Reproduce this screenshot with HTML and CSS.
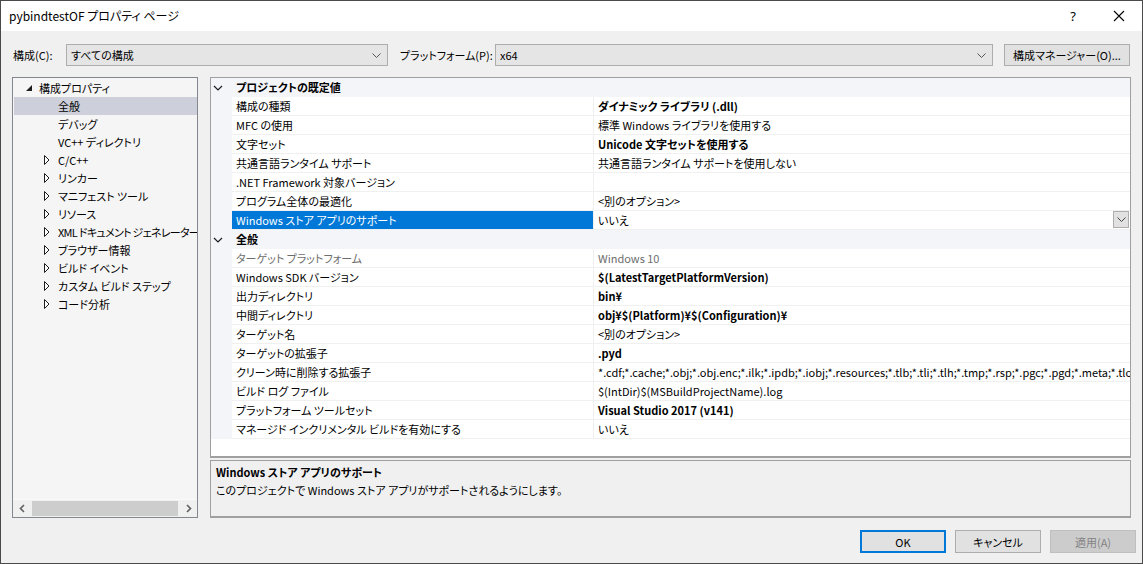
FILE: index.html
```html
<!DOCTYPE html>
<html lang="ja">
<head>
<meta charset="utf-8">
<title>pybindtestOF プロパティ ページ</title>
<link rel="stylesheet" href="styles.css">
</head>
<body>
<div class="window">
  <div class="titlebar">
    <span class="title">pybindtestOF プロパティ ページ</span>
    <span class="tb-btn help">?</span>
    <span class="tb-btn close"><svg width="12" height="12" viewBox="0 0 12 12"><path d="M1 1 L11 11 M11 1 L1 11" stroke="#000" stroke-width="1.1" fill="none"/></svg></span>
  </div>
  <div class="content">
    <div class="toprow">
      <span class="lbl lbl-conf">構成(C):</span>
      <div class="combo combo-conf"><span>すべての構成</span><svg class="chev" width="9" height="5" viewBox="0 0 9 5"><polyline points="0.5,0.5 4.5,4.5 8.5,0.5" fill="none" stroke="#555" stroke-width="1"/></svg></div>
      <span class="lbl lbl-plat">プラットフォーム(P):</span>
      <div class="combo combo-plat"><span>x64</span><svg class="chev" width="9" height="5" viewBox="0 0 9 5"><polyline points="0.5,0.5 4.5,4.5 8.5,0.5" fill="none" stroke="#555" stroke-width="1"/></svg></div>
      <div class="btn btn-mgr">構成マネージャー(O)...</div>
    </div>
    <div class="main">
      <div class="tree">
        <div class="tree-items">
          <div class="ti l0"><span class="tg"><svg width="6" height="6" viewBox="0 0 6 6"><polygon points="6,0 6,6 0,6" fill="#1e1e1e"/></svg></span><span>構成プロパティ</span></div>
          <div class="ti l1 sel"><span class="tg"></span><span>全般</span></div>
          <div class="ti l1"><span class="tg"></span><span>デバッグ</span></div>
          <div class="ti l1"><span class="tg"></span><span>VC++ ディレクトリ</span></div>
          <div class="ti l1"><span class="tg"><svg width="6" height="10" viewBox="0 0 6 10"><polygon points="0.5,0.5 5,5 0.5,9.5" fill="#fff" stroke="#1e1e1e" stroke-width="1"/></svg></span><span>C/C++</span></div>
          <div class="ti l1"><span class="tg"><svg width="6" height="10" viewBox="0 0 6 10"><polygon points="0.5,0.5 5,5 0.5,9.5" fill="#fff" stroke="#1e1e1e" stroke-width="1"/></svg></span><span>リンカー</span></div>
          <div class="ti l1"><span class="tg"><svg width="6" height="10" viewBox="0 0 6 10"><polygon points="0.5,0.5 5,5 0.5,9.5" fill="#fff" stroke="#1e1e1e" stroke-width="1"/></svg></span><span>マニフェスト ツール</span></div>
          <div class="ti l1"><span class="tg"><svg width="6" height="10" viewBox="0 0 6 10"><polygon points="0.5,0.5 5,5 0.5,9.5" fill="#fff" stroke="#1e1e1e" stroke-width="1"/></svg></span><span>リソース</span></div>
          <div class="ti l1"><span class="tg"><svg width="6" height="10" viewBox="0 0 6 10"><polygon points="0.5,0.5 5,5 0.5,9.5" fill="#fff" stroke="#1e1e1e" stroke-width="1"/></svg></span><span class="xml">XML ドキュメント ジェネレーター</span></div>
          <div class="ti l1"><span class="tg"><svg width="6" height="10" viewBox="0 0 6 10"><polygon points="0.5,0.5 5,5 0.5,9.5" fill="#fff" stroke="#1e1e1e" stroke-width="1"/></svg></span><span>ブラウザー情報</span></div>
          <div class="ti l1"><span class="tg"><svg width="6" height="10" viewBox="0 0 6 10"><polygon points="0.5,0.5 5,5 0.5,9.5" fill="#fff" stroke="#1e1e1e" stroke-width="1"/></svg></span><span>ビルド イベント</span></div>
          <div class="ti l1"><span class="tg"><svg width="6" height="10" viewBox="0 0 6 10"><polygon points="0.5,0.5 5,5 0.5,9.5" fill="#fff" stroke="#1e1e1e" stroke-width="1"/></svg></span><span>カスタム ビルド ステップ</span></div>
          <div class="ti l1"><span class="tg"><svg width="6" height="10" viewBox="0 0 6 10"><polygon points="0.5,0.5 5,5 0.5,9.5" fill="#fff" stroke="#1e1e1e" stroke-width="1"/></svg></span><span>コード分析</span></div>
        </div>
        <div class="hscroll">
          <span class="sarrow"><svg width="6" height="9" viewBox="0 0 6 9"><polyline points="5,1 1.5,4.5 5,8" fill="none" stroke="#606060" stroke-width="1.6"/></svg></span>
          <span class="thumb"></span>
          <span class="sarrow"><svg width="6" height="9" viewBox="0 0 6 9"><polyline points="1,1 4.5,4.5 1,8" fill="none" stroke="#606060" stroke-width="1.6"/></svg></span>
        </div>
      </div>
      <div class="right">
        <div class="grid">
          <div class="cat"><span class="cchev"><svg width="10" height="6" viewBox="0 0 10 6"><polyline points="1,1 5,5 9,1" fill="none" stroke="#1e1e1e" stroke-width="1.2"/></svg></span><span>プロジェクトの既定値</span></div>
          <div class="row"><span class="gut"></span><span class="name">構成の種類</span><span class="val b">ダイナミック ライブラリ (.dll)</span></div>
          <div class="row"><span class="gut"></span><span class="name">MFC の使用</span><span class="val">標準 Windows ライブラリを使用する</span></div>
          <div class="row"><span class="gut"></span><span class="name">文字セット</span><span class="val b">Unicode 文字セットを使用する</span></div>
          <div class="row"><span class="gut"></span><span class="name">共通言語ランタイム サポート</span><span class="val">共通言語ランタイム サポートを使用しない</span></div>
          <div class="row"><span class="gut"></span><span class="name">.NET Framework 対象バージョン</span><span class="val"></span></div>
          <div class="row"><span class="gut"></span><span class="name">プログラム全体の最適化</span><span class="val">&lt;別のオプション&gt;</span></div>
          <div class="row selrow"><span class="gut"></span><span class="name">Windows ストア アプリのサポート</span><span class="val">いいえ<span class="ddbtn"><svg width="9" height="5" viewBox="0 0 9 5"><polyline points="0.5,0.5 4.5,4.5 8.5,0.5" fill="none" stroke="#444" stroke-width="1"/></svg></span></span></div>
          <div class="cat"><span class="cchev"><svg width="10" height="6" viewBox="0 0 10 6"><polyline points="1,1 5,5 9,1" fill="none" stroke="#1e1e1e" stroke-width="1.2"/></svg></span><span>全般</span></div>
          <div class="row dis"><span class="gut"></span><span class="name">ターゲット プラットフォーム</span><span class="val">Windows 10</span></div>
          <div class="row"><span class="gut"></span><span class="name">Windows SDK バージョン</span><span class="val b">$(LatestTargetPlatformVersion)</span></div>
          <div class="row"><span class="gut"></span><span class="name">出力ディレクトリ</span><span class="val b">bin¥</span></div>
          <div class="row"><span class="gut"></span><span class="name">中間ディレクトリ</span><span class="val b">obj¥$(Platform)¥$(Configuration)¥</span></div>
          <div class="row"><span class="gut"></span><span class="name">ターゲット名</span><span class="val">&lt;別のオプション&gt;</span></div>
          <div class="row"><span class="gut"></span><span class="name">ターゲットの拡張子</span><span class="val b">.pyd</span></div>
          <div class="row"><span class="gut"></span><span class="name">クリーン時に削除する拡張子</span><span class="val">*.cdf;*.cache;*.obj;*.obj.enc;*.ilk;*.ipdb;*.iobj;*.resources;*.tlb;*.tli;*.tlh;*.tmp;*.rsp;*.pgc;*.pgd;*.meta;*.tlog;*.manifest;*.res;*.pch;*.exp;*.idb;*.rep;*.xdc;*.pdb</span></div>
          <div class="row"><span class="gut"></span><span class="name">ビルド ログ ファイル</span><span class="val">$(IntDir)$(MSBuildProjectName).log</span></div>
          <div class="row"><span class="gut"></span><span class="name">プラットフォーム ツールセット</span><span class="val b">Visual Studio 2017 (v141)</span></div>
          <div class="row"><span class="gut"></span><span class="name">マネージド インクリメンタル ビルドを有効にする</span><span class="val">いいえ</span></div>
        </div>
        <div class="desc">
          <div class="desc-title">Windows ストア アプリのサポート</div>
          <div class="desc-text">このプロジェクトで Windows ストア アプリがサポートされるようにします。</div>
        </div>
      </div>
    </div>
    <div class="buttons">
      <div class="btn btn-ok">OK</div>
      <div class="btn">キャンセル</div>
      <div class="btn btn-dis">適用(A)</div>
    </div>
  </div>
</div>
</body>
</html>
```
FILE: styles.css
```css
html, body {
  margin: 0;
  padding: 0;
}
body {
  font-family: "Noto Sans CJK JP", "Noto Sans", sans-serif;
  font-size: 11px;
  font-feature-settings: "palt";
  color: #000;
  overflow: hidden;
  background: #f0f0f0;
}
.window {
  width: 1143px;
  height: 564px;
  box-sizing: border-box;
  border: 1px solid #4a4a4a;
  display: flex;
  flex-direction: column;
  background: #f0f0f0;
}
.titlebar {
  height: 30px;
  flex: none;
  background: #fff;
  display: flex;
  align-items: center;
}
.title {
  flex: 1;
  padding-left: 8px;
  font-size: 12px;
  padding-bottom: 1px;
}
.tb-btn {
  width: 46px;
  height: 30px;
  display: flex;
  align-items: center;
  justify-content: center;
}
.help {
  font-size: 13px;
  font-family: "Noto Sans", sans-serif;
}
.content {
  flex: 1;
  padding: 13px 11px 0 11px;
  display: flex;
  flex-direction: column;
}
.toprow {
  display: flex;
  align-items: center;
  height: 22px;
}
.lbl {
  flex: none;
  white-space: nowrap;
}
.lbl-conf { width: 54px; padding-left: 1px; box-sizing: border-box; }
.lbl-plat { width: 96px; margin-left: 11px; padding-left: 1px; box-sizing: border-box; }
.combo {
  height: 22px;
  box-sizing: border-box;
  border: 1px solid #adadad;
  background: #e5e5e5;
  display: flex;
  align-items: center;
  justify-content: space-between;
  padding: 0 6px 0 4px;
}
.combo-conf { width: 322px; }
.combo-plat { width: 498px; }
.btn {
  height: 23px;
  width: 86px;
  box-sizing: border-box;
  border: 1px solid #adadad;
  background: #e1e1e1;
  display: flex;
  align-items: center;
  justify-content: center;
  white-space: nowrap;
}
.btn-mgr {
  width: 126px;
  height: 22px;
  margin-left: 11px;
}
.main {
  display: flex;
  gap: 12px;
  margin-top: 11px;
  height: 441px;
}
.tree {
  width: 186px;
  flex: none;
  box-sizing: border-box;
  border: 1px solid #828790;
  background: #f5f5f5;
  display: flex;
  flex-direction: column;
}
.tree-items {
  flex: 1;
  padding: 1px 0 0 1px;
  overflow: hidden;
}
.ti {
  height: 18px;
  line-height: 18px;
  display: flex;
  align-items: center;
  white-space: nowrap;
  width: 182px;
}
.ti.l0 { padding-left: 12px; }
.ti.l0 .tg { width: 13px; }
.ti.l1 { padding-left: 30px; }
.ti.l1 .tg { width: 14px; }
.tg {
  display: flex;
  align-items: center;
  flex: none;
  height: 18px;
}
.ti.sel { background: #cdd0da; }
.xml { letter-spacing: -0.7px; }
.hscroll {
  height: 17px;
  flex: none;
  background: #f0f0f0;
  border-top: 1px solid #fafafa;
  display: flex;
  align-items: center;
}
.sarrow {
  width: 17px;
  height: 17px;
  display: flex;
  align-items: center;
  justify-content: center;
  flex: none;
}
.thumb {
  flex: 1;
  height: 15px;
  background: #cdcdcd;
  margin: 0 2px;
}
.right {
  flex: 1;
  display: flex;
  flex-direction: column;
  gap: 2px;
  min-width: 0;
}
.grid {
  height: 381px;
  flex: none;
  box-sizing: border-box;
  border: 1px solid #a0a0a0;
  border-bottom-width: 2px;
  background: #fff;
  overflow: hidden;
}
.cat {
  height: 19px;
  line-height: 19px;
  background: #f4f5f9;
  display: flex;
  align-items: center;
  font-weight: bold;
}
.cchev {
  width: 25px;
  padding-left: 2px;
  box-sizing: border-box;
  display: flex;
  align-items: center;
  flex: none;
}
.row {
  height: 19px;
  line-height: 18px;
  display: flex;
  white-space: nowrap;
}
.gut {
  width: 21px;
  flex: none;
  background: #f4f5f9;
}
.name {
  width: 362px;
  flex: none;
  box-sizing: border-box;
  padding-left: 4px;
  border-right: 1px solid #f0f0f0;
  border-bottom: 1px solid #f0f0f0;
  overflow: hidden;
}
.val {
  flex: 1;
  padding-left: 4px;
  border-bottom: 1px solid #f0f0f0;
  overflow: hidden;
  position: relative;
  min-width: 0;
}
.b { font-weight: bold; }
.dis .name, .dis .val { color: #6d6d6d; }
.selrow .name {
  background: #0078d7;
  color: #fff;
}
.ddbtn {
  position: absolute;
  right: 1px;
  top: 0;
  width: 16px;
  height: 17px;
  box-sizing: border-box;
  border: 1px solid #adadad;
  background: #e1e1e1;
  display: flex;
  align-items: center;
  justify-content: center;
}
.desc {
  flex: 1;
  box-sizing: border-box;
  border: 1px solid #a0a0a0;
  border-bottom-width: 2px;
  padding: 2px 5px;
  line-height: 18px;
}
.desc-title { font-weight: bold; }
.buttons {
  display: flex;
  justify-content: flex-end;
  gap: 9px;
  margin-top: 12px;
  margin-right: -5px;
}
.btn-ok {
  border: 2px solid #0078d7;
}
.btn-dis {
  background: #cccccc;
  border-color: #bfbfbf;
  color: #838383;
}
```
